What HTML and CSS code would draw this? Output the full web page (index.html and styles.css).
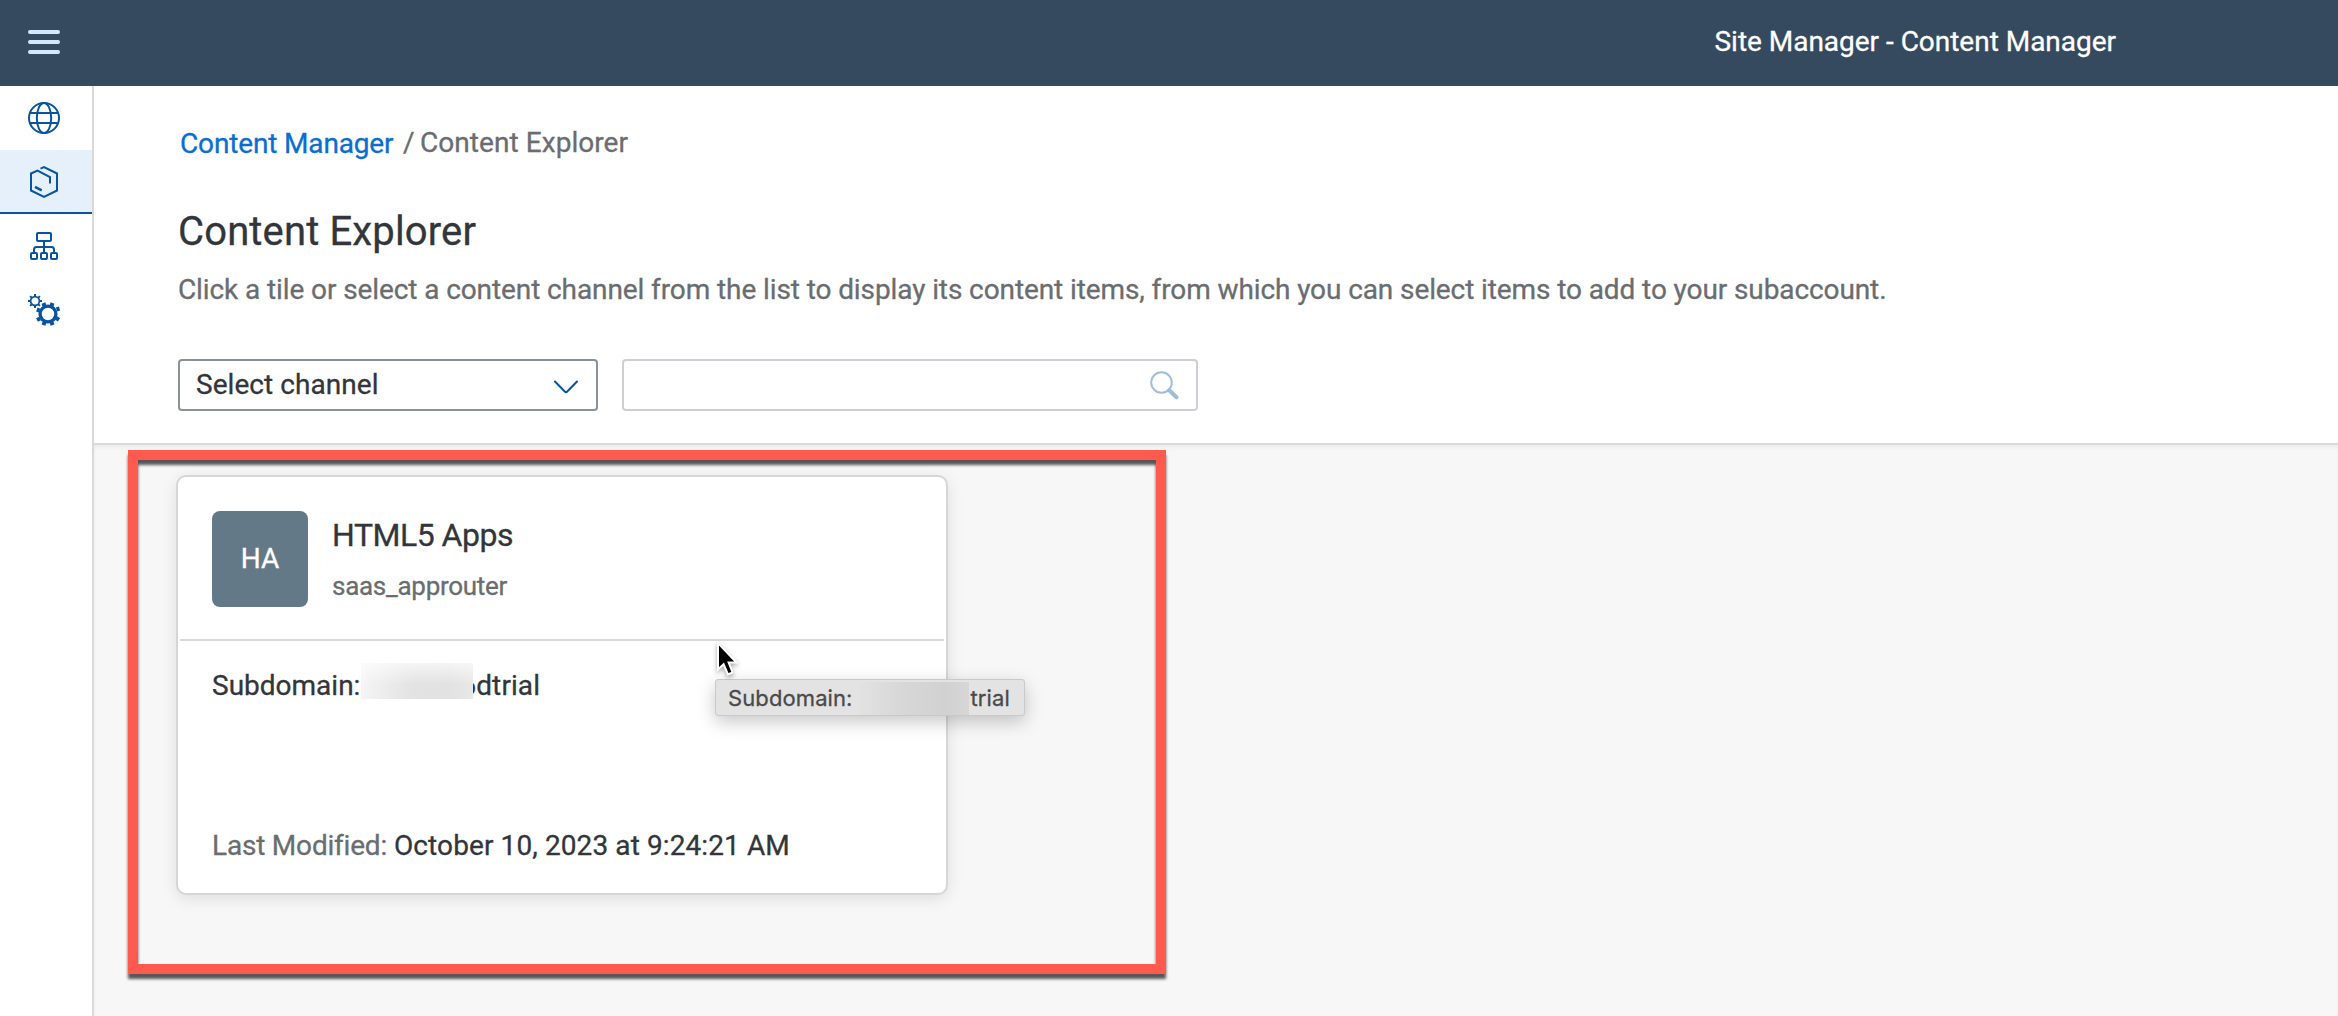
FILE: index.html
```html
<!DOCTYPE html>
<html lang="en">
<head>
<meta charset="utf-8">
<title>Site Manager - Content Manager</title>
<link rel="stylesheet" href="styles.css">
</head>
<body>
<header class="shell">
  <button class="menu" aria-label="Menu"><span></span><span></span><span></span></button>
  <div class="shell-title">Site Manager - Content Manager</div>
</header>
<div class="body">
  <nav class="side">
    <a class="side-item" href="#" aria-label="Sites">
      <svg width="32" height="32" viewBox="0 0 32 32" fill="none" stroke="#0854a0" stroke-width="2"><circle cx="16" cy="16" r="15"/><ellipse cx="16" cy="16" rx="7.2" ry="15"/><path d="M2.2 11h27.600M2.200 21h27.600"/></svg>
    </a>
    <a class="side-item side-item--active" href="#" aria-label="Content">
      <svg width="32" height="32" viewBox="0 0 32 32" fill="none" stroke="#0854a0" stroke-width="2"><path d="M12.500 2.700L16 1.200L29 7.500V24.500L16 30.800L3 24.500V7.500L9.500 4.600L22 11V17.500"/><path stroke-width="2.500" d="M7 20.800L13.700 24.300"/></svg>
    </a>
    <a class="side-item" href="#" aria-label="Channels">
      <svg width="32" height="32" viewBox="0 0 32 32" fill="none" stroke="#0854a0" stroke-width="2"><rect x="9" y="3" width="14" height="8" rx="1"/><rect x="3" y="23" width="6" height="6" rx="1"/><rect x="13" y="23" width="6" height="6" rx="1"/><rect x="23" y="23" width="6" height="6" rx="1"/><path d="M16 11V23M6 23V19.500Q6 17 8.500 17H23.500Q26 17 26 19.500V23"/></svg>
    </a>
    <a class="side-item" href="#" aria-label="Settings">
      <svg width="32" height="32" viewBox="0 0 32 32" fill="none" stroke="#0854a0"><circle cx="7" cy="7" r="4.400" stroke-width="1.700"/><path stroke-width="2" d="M7 0V2.500M7 11.500V14M0 7H2.500M11.500 7H14M2.100 2.100L3.900 3.900M10.100 10.100L11.900 11.900M2.100 11.900L3.900 10.100M10.100 3.900L11.900 2.100"/><circle cx="20" cy="20" r="7.900" stroke-width="3.400"/><path stroke-width="4" d="M24.500 9L23.500 12M28.500 15.500L31.500 14.500M28 24L31 25.800M23.500 28L24.500 31.200M16.500 28L15.500 31.200M12 24.500L9 26M11.500 16.500L8.800 15.500M16.500 12L15.500 9"/></svg>
    </a>
  </nav>
  <main class="main">
    <section class="page-head">
      <div class="crumbs"><a class="crumb-link" href="#">Content Manager</a><span class="crumb-sep">/</span><span class="crumb-here">Content Explorer</span></div>
      <h1 class="title">Content Explorer</h1>
      <p class="desc">Click a tile or select a content channel from the list to display its content items, from which you can select items to add to your subaccount.</p>
      <div class="filters">
        <div class="select"><span>Select channel</span>
          <svg width="24" height="14" viewBox="0 0 24 14" fill="none" stroke="#0854a0" stroke-width="2" stroke-linecap="round" stroke-linejoin="round"><path d="M1 1.500L11 11.700Q12 12.500 13 11.700L23 1.500"/></svg>
        </div>
        <div class="search">
          <svg width="29" height="29" viewBox="0 0 29 29" fill="none" stroke="#a2bcdb"><circle cx="11.500" cy="11.500" r="10.300" stroke-width="1.900"/><path d="M19.200 19.200L26.500 26.300" stroke-width="4" stroke-linecap="round"/></svg>
        </div>
      </div>
    </section>
    <section class="tiles">
      <article class="card">
        <div class="card-head">
          <div class="avatar">HA</div>
          <div class="card-names"><div class="card-name">HTML5 Apps</div><div class="card-sub">saas_approuter</div></div>
        </div>
        <div class="card-body">
          <div class="line"><span>Subdomain:</span><span class="redact"></span><span class="domain">6dtrial</span></div>
          <div class="line modified"><span class="label">Last Modified:</span><span class="date">October 10, 2023 at 9:24:21 AM</span></div>
        </div>
      </article>
    </section>
  </main>
</div>
<div class="highlight"></div>
<div class="tooltip"><span>Subdomain:</span><span class="tooltip-redact"></span><span>trial</span></div>
<svg class="cursor" width="28" height="42" viewBox="0 0 28 42"><path d="M3 3V29.500L8.600 24.300L13 34.500L17.600 32.500L13.600 22.500H21.500Z" fill="#000" stroke="#fff" stroke-width="2"/></svg>
</body>
</html>
```
FILE: styles.css
```css
* { box-sizing: border-box; }
body {
  margin: 0;
  height: 1016px;
  display: flex;
  flex-direction: column;
  overflow: hidden;
  position: relative;
  background: #fff;
  color: #32363a;
  font: 28px/40px Roboto, "Liberation Sans", sans-serif;
  -webkit-text-stroke: 0.3px currentColor;
}
a { color: inherit; text-decoration: none; }

.shell {
  flex: none;
  height: 86px;
  display: flex;
  align-items: center;
  justify-content: space-between;
  padding: 0 222px 0 28px;
  background: #354a5f;
  color: #fff;
}
.menu {
  display: flex;
  flex-direction: column;
  gap: 6px;
  padding: 0;
  margin-top: -2px;
  border: 0;
  background: none;
}
.menu span { width: 32px; height: 4px; border-radius: 2px; background: #d1e8ff; }
.shell-title { letter-spacing: -0.02px; padding-bottom: 3px; }

.body { flex: 1; display: flex; min-height: 0; }
.side { width: 94px; border-right: 2px solid #d9d9d9; }
.side-item {
  display: flex;
  height: 64px;
  padding-left: 28px;
  align-items: center;
}
.side-item--active { padding-top: 2px; background: #e5f0fa; border-bottom: 2px solid #0854a0; }

.main { flex: 1; display: flex; flex-direction: column; }
.page-head {
  flex: none;
  height: 359px;
  padding: 37px 84px 0;
  border-bottom: 2px solid #d9d9d9;
  background: #fff;
}
.crumbs { display: flex; padding-left: 2px; }
.crumb-link { color: #0a6ed1; width: 223px; letter-spacing: -0.15px; padding-top: 1px; margin-bottom: -1px; }
.crumb-sep { width: 17px; color: #6a6d70; }
.crumb-here { color: #6a6d70; letter-spacing: 0.06px; }
.title {
  margin: 44px 0 13px;
  font-size: 40px;
  line-height: 50px;
  font-weight: 400;
  letter-spacing: 0.14px;
}
.desc { margin: 0 0 49px; color: #6a6d70; letter-spacing: -0.1px; white-space: nowrap; }
.filters { display: flex; gap: 24px; }
.select, .search {
  height: 52px;
  display: flex;
  align-items: center;
  border: 2px solid #89919a;
  border-radius: 4px;
}
.select {
  width: 420px;
  justify-content: space-between;
  padding: 0 18px 0 16px;
  letter-spacing: 0.06px;
}
.select span { padding-bottom: 1px; }
.select svg { margin-top: 3px; }
.search { width: 576px; justify-content: flex-end; padding-right: 17px; border-color: #ccd0d4; }

.tiles {
  flex: 1;
  padding: 30px 82px;
  background: #f7f7f7;
  box-shadow: inset 0 4px 5px -2px rgba(0, 0, 0, .06);
}
.card {
  width: 772px;
  height: 420px;
  border: 2px solid #d5d6d7;
  border-radius: 10px;
  background: #fff;
  box-shadow: 0 4px 16px rgba(0, 0, 0, .1);
}
.card-head {
  display: flex;
  gap: 24px;
  height: 164px;
  margin: 0 2px;
  padding: 34px 32px;
  border-bottom: 2px solid #d9d9d9;
}
.avatar {
  width: 96px;
  height: 96px;
  border-radius: 8px;
  background: #647987;
  color: #fff;
  line-height: 96px;
  text-align: center;
}
.card-names { padding-top: 4px; }
.card-name { font-size: 32px; letter-spacing: -0.5px; }
.card-sub { margin-top: 14px; font-size: 26px; line-height: 34px; color: #6a6d70; letter-spacing: -0.28px; }
.card-body {
  height: 252px;
  display: flex;
  flex-direction: column;
  justify-content: space-between;
  padding: 25px 34px 27px;
}
.line { display: flex; align-items: center; }
.redact {
  position: relative;
  width: 112px;
  height: 36px;
  margin: -11px 0 0 1px;
  background: linear-gradient(rgba(255, 255, 255, .65), rgba(255, 255, 255, 0) 60%), linear-gradient(90deg, #f5f5f5, #e3e3e3 45%, #e2e2e2 80%, #e8e8e8);
}
.domain { margin-left: -13px; letter-spacing: 0.1px; }
.label { width: 182px; color: #6a6d70; letter-spacing: -0.2px; }
.date { letter-spacing: 0.1px; }

.highlight {
  position: absolute;
  left: 128px;
  top: 450px;
  width: 1038px;
  height: 524px;
  border: 10px solid #ff5a4d;
  filter: drop-shadow(0 5px 1.500px rgba(0, 0, 0, .65));
}
.tooltip {
  position: absolute;
  left: 715px;
  top: 679px;
  width: 310px;
  height: 37px;
  display: flex;
  align-items: center;
  padding: 1px 0 0 12px;
  border: 1px solid #c9c9c9;
  border-radius: 3px;
  background: #e3e3e3;
  box-shadow: 0 6px 18px rgba(0, 0, 0, .22);
  color: #4a4a4a;
  font: 22px/34px Inter, sans-serif;
  letter-spacing: 0.1px;
}
.tooltip-redact {
  width: 110px;
  height: 33px;
  margin: 0 2px 0 6px;
  background: linear-gradient(90deg, #e2e2e2, #d7d7d7 40%, #d1d1d1 80%, #d7d7d7);
}
.cursor { position: absolute; left: 715px; top: 640px; filter: drop-shadow(0 2px 2px rgba(0, 0, 0, .35)); }
```
